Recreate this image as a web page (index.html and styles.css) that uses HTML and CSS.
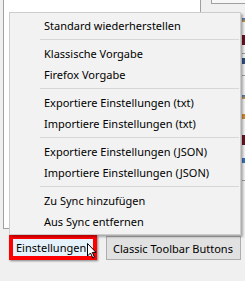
FILE: index.html
```html
<!DOCTYPE html>
<html lang="de">
<head>
  <meta charset="UTF-8">
  <title>Einstellungen</title>
  <link rel="stylesheet" href="styles.css">
</head>
<body>
  <div class="main">
    <div class="panel"></div>
    <div class="side">
      <div class="side-top"></div>
      <div class="side-list">
        <div class="row row-a">
          <span class="mark icon"></span>
          <span class="mark bar"></span>
        </div>
        <div class="row row-b">
          <span class="mark letter"></span>
        </div>
        <div class="row row-c">
          <span class="mark icon"></span>
          <span class="mark vee"></span>
          <span class="mark bar"></span>
          <span class="mark vee blue"></span>
        </div>
      </div>
    </div>
  </div>

  <div class="actions">
    <div class="highlight">
      <button class="btn btn-hover">Einstellungen</button>
    </div>
    <button class="btn btn-classic">Classic Toolbar Buttons</button>
  </div>

  <ul class="menu">
    <li>Standard wiederherstellen</li>
    <li class="sep"></li>
    <li>Klassische Vorgabe</li>
    <li>Firefox Vorgabe</li>
    <li class="sep"></li>
    <li>Exportiere Einstellungen (txt)</li>
    <li>Importiere Einstellungen (txt)</li>
    <li class="sep"></li>
    <li>Exportiere Einstellungen (JSON)</li>
    <li>Importiere Einstellungen (JSON)</li>
    <li class="sep"></li>
    <li>Zu Sync hinzufügen</li>
    <li>Aus Sync entfernen</li>
  </ul>

  <svg class="cursor" width="10" height="16" viewBox="0 0 10 16">
    <path d="M0.5 0.5 L0.5 13 L3.5 10 L5.8 15 L7.5 14.2 L5.3 9.4 L9 9.4 Z" fill="#fff" stroke="#000" stroke-width="1" stroke-linejoin="miter"/>
  </svg>
</body>
</html>
```

FILE: styles.css
```css
*{
  margin: 0;
  padding: 0;
  box-sizing: border-box;
}
body{
  position: relative;
  width: 245px;
  height: 281px;
  overflow: hidden;
  background: #f0f0f0;
  font-family: "Noto Sans", "Open Sans", sans-serif;
  font-size: 11px;
  color: #000;
}
.main{
  display: flex;
  height: 229px;
}
.panel{
  width: 200px;
  margin-left: 3px;
  background: #fff;
  border: 1px solid #a0a0a0;
  border-top: none;
}
.side{
  flex: 1;
  margin-left: 10px;
}
.side-top{
  height: 4px;
  background: #f7f7f7;
  border-left: 1px solid #a0a0a0;
  border-bottom: 1px solid #a0a0a0;
}
.side-list{
  margin-left: 29px;
  margin-top: 8px;
  border-left: 1px solid #c8c8c8;
  padding-left: 1px;
}
.row{
  border-bottom: 1px solid #a0a0a0;
}
.row-a{
  height: 42px;
  padding-top: 6px;
}
.row-b{
  height: 22px;
  padding-top: 4px;
}
.row-c{
  height: 105px;
  padding-top: 19px;
}
.mark{
  display: block;
  width: 3px;
}
.icon{
  height: 4px;
  background: linear-gradient(#3a78c8, #e0962a);
}
.bar{
  height: 10px;
  margin-top: 13px;
  background: #6e1020;
}
.row-c .bar{
  margin-top: 16px;
}
.letter{
  height: 6px;
  background: #2c4f86;
}
.vee{
  height: 5px;
  margin-top: 15px;
  background: #d08a2a;
}
.vee.blue{
  margin-top: 13px;
  background: #3a6fb8;
}
.actions{
  display: flex;
  align-items: flex-start;
  gap: 9px;
  margin-top: 6px;
  padding-left: 9px;
}
.highlight{
  width: 88px;
  height: 25px;
  border: 4px solid #ff0000;
  box-shadow: 1px 1px 2px rgba(0, 0, 0, 0.45);
}
.btn{
  display: block;
  font: inherit;
  color: #000;
  text-align: left;
  white-space: nowrap;
}
.btn-hover{
  width: 100%;
  height: 100%;
  padding-left: 3px;
  background: #e5f1fb;
  border: none;
}
.btn-classic{
  width: 135px;
  height: 24px;
  margin-top: 1px;
  padding-left: 6px;
  background: #e1e1e1;
  border: 1px solid #adadad;
}
.menu{
  position: absolute;
  left: 9px;
  top: 12px;
  width: 232px;
  padding: 2px 0;
  list-style: none;
  background: #f2f2f2;
  border: 1px solid #cccccc;
  box-shadow: 2px 2px 2px rgba(0, 0, 0, 0.3);
}
.menu li{
  height: 21px;
  line-height: 21px;
  padding-left: 34px;
  white-space: nowrap;
}
.menu .sep{
  height: 7px;
  padding: 0;
  margin: 0 1px 0 30px;
  background: linear-gradient(transparent 3px, #d7d7d7 3px, #d7d7d7 4px, transparent 4px);
}
.cursor{
  position: absolute;
  left: 87px;
  top: 243px;
}
```
